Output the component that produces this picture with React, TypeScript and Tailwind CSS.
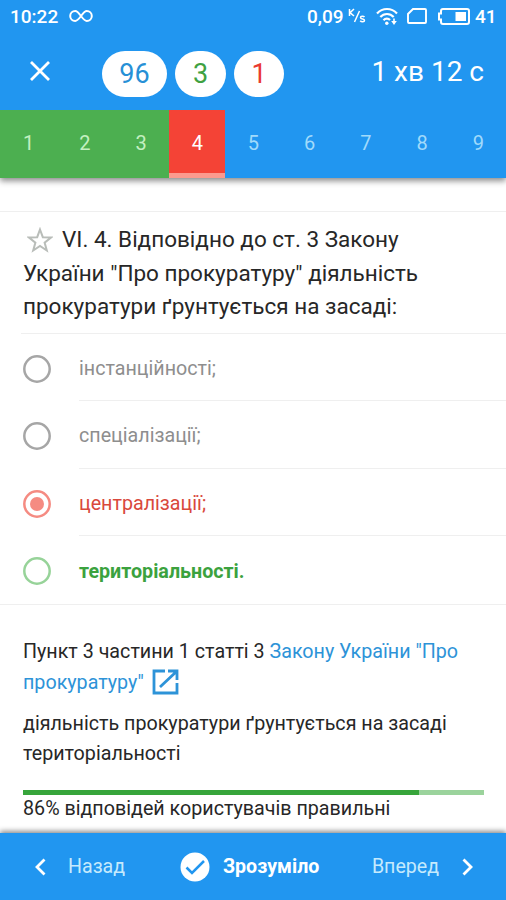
import clsx from 'clsx';

const tabs = [1, 2, 3, 4, 5, 6, 7, 8, 9];

const answers = [
  { text: 'інстанційності;', state: 'idle' },
  { text: 'спеціалізації;', state: 'idle' },
  { text: 'централізації;', state: 'wrong' },
  { text: 'територіальності.', state: 'correct' },
];

const correctPercent = 86;

function StatusBar() {
  return (
    <div className="flex h-8 items-center pl-[10px] pr-[10px] text-[19px] font-medium leading-none text-white">
      <span className="w-[50px] whitespace-nowrap">10:22</span>
      <svg className="ml-[9px] h-[14px] w-6" viewBox="0 0 24 14" fill="none" stroke="currentColor" strokeWidth="2">
        <path d="M12 7C9.8 4 8.4 2 6.2 2a5 5 0 0 0 0 10C8.4 12 9.800 10 12 7s3.600-5 5.800-5a5 5 0 0 1 0 10C15.600 12 14.200 10 12 7z" />
      </svg>
      <span className="ml-auto w-[38px] whitespace-nowrap">0,09</span>
      <svg className="ml-[3px] h-4 w-[18px]" viewBox="0 0 18 16" fill="none" stroke="currentColor" strokeWidth="1.500">
        <path d="M1.500 1v7M6 1 2 4.700 6 8M11.500 3 6.500 14" />
        <path d="M16.500 9c-1-1.200-4-1.200-4 .400 0 2 4 1.200 4 3 0 1.600-3.200 1.600-4.300.300" />
      </svg>
      <svg className="ml-[10px] h-[19px] w-[22px]" viewBox="0 0 22 19" fill="none" stroke="currentColor" strokeWidth="2.200">
        <path d="M1 6.500C6.500.500 15.500.500 21 6.500M4.300 10c3.700-4 9.700-4 13.400 0M7.500 13.200c1.900-2 4.800-2 6.500-.200" />
        <circle cx="10.800" cy="16.300" r="1.700" fill="currentColor" stroke="none" />
        <path d="M18 11.500v4" strokeWidth="1.600" />
        <path d="M15.200 14h5.600L18 18z" fill="currentColor" stroke="none" />
      </svg>
      <svg className="ml-[9px] h-4 w-5" viewBox="0 0 20 16" fill="none" stroke="currentColor" strokeWidth="1.900">
        <path d="M6 1h12a1 1 0 0 1 1 1v12a1 1 0 0 1-1 1H2a1 1 0 0 1-1-1V6z" />
      </svg>
      <svg className="ml-[10px] h-[17px] w-[33px]" viewBox="0 0 33 17" fill="none" stroke="currentColor" strokeWidth="2">
        <path d="M6 1h24a2 2 0 0 1 2 2v11a2 2 0 0 1-2 2H6a2 2 0 0 1-2-2v-2.500H2v-6h2V3a2 2 0 0 1 2-2z" />
        <path d="M18.500 4H29v9H18.500z" fill="currentColor" stroke="none" />
      </svg>
      <span className="ml-[5px] w-[21px]">41</span>
    </div>
  );
}

function Toolbar() {
  return (
    <div className="flex h-[78px] items-center pl-[29px] pr-[22px] pt-[6px]">
      <svg className="mb-[6px] h-[22px] w-[22px]" viewBox="0 0 22 22" fill="none" stroke="#fff" strokeWidth="2.800">
        <path d="m2 2 18 18M20 2 2 20" />
      </svg>
      <div className="ml-[51px] flex gap-2 text-[27px] leading-none">
        <span className="flex h-[46px] w-[65px] items-center justify-center rounded-full bg-white text-[#2790d6]">96</span>
        <span className="flex h-[46px] w-[51px] items-center justify-center rounded-full bg-white text-[#3fa142]">3</span>
        <span className="flex h-[46px] w-[50px] items-center justify-center rounded-full bg-white text-[#ea3a30]">1</span>
      </div>
      <span className="mb-[5px] ml-auto whitespace-nowrap text-[28px] leading-none text-white">1 хв 12 с</span>
    </div>
  );
}

function QuestionTabs() {
  return (
    <div className="grid h-[68px] grid-cols-9 text-[20px]">
      {tabs.map((n) => (
        <div
          key={n}
          className={clsx(
            'flex items-center justify-center pb-[2px] pl-px',
            n < 4 && 'bg-[#4caf50] text-[#c3f0c0]',
            n === 4 && 'border-b-[5px] border-[#fb9a8e] bg-[#f44336] pt-[5px] text-white',
            n > 4 && 'text-[#a0dafb]'
          )}
        >
          {n}
        </div>
      ))}
    </div>
  );
}

const radioColors: Record<string, string> = {
  idle: 'text-[#a6a6a6]',
  wrong: 'text-[#f58b82]',
  correct: 'text-[#97d399]',
};

function Radio({ state }: { state: string }) {
  return (
    <svg className={clsx('h-7 w-7 shrink-0', radioColors[state])} viewBox="0 0 28 28" fill="none" stroke="currentColor" strokeWidth="2.500">
      <circle cx="14" cy="14" r="12.700" />
      {state === 'wrong' && <circle cx="14" cy="14" r="7" fill="currentColor" stroke="none" />}
    </svg>
  );
}

export default function App() {
  return (
    <div className="flex h-[900px] w-[506px] flex-col overflow-hidden bg-white font-[Roboto,sans-serif] text-[#272727]">
      <header className="relative bg-[#2196f0] shadow-[0_3px_6px_rgba(0,0,0,0.45)]">
        <StatusBar />
        <Toolbar />
        <QuestionTabs />
      </header>

      <main className="flex-1">
        <div className="mt-[33px] border-t border-[#efefef]" />
        <h1 className="ml-[23px] mt-[11px] text-[22.500px] leading-[33.500px]">
          <span className="flex items-center">
            <svg className="ml-[4px] mr-[9px] h-[26px] w-[26px]" viewBox="0 0 26 26" fill="none" stroke="#b9bdb9" strokeWidth="2">
              <path d="m13 2.500 2.800 7.700 8.200.300-6.400 5.100 2.200 7.900L13 19l-6.800 4.500 2.200-7.900L2 10.500l8.200-.300z" />
            </svg>
            <span className="whitespace-nowrap">VI. 4. Відповідно до ст. 3 Закону</span>
          </span>
          <span className="block whitespace-nowrap">України "Про прокуратуру" діяльність</span>
          <span className="block whitespace-nowrap">прокуратури ґрунтується на засаді:</span>
        </h1>
        <div className="ml-[21px] mt-[9px] border-t border-[#efefef]" />

        <ul>
          {answers.map((a, i) => (
            <li key={a.text} className="flex h-[67.500px] items-stretch pl-[23px]">
              <span className="flex items-center pt-[3px]">
                <Radio state={a.state} />
              </span>
              <span
                className={clsx(
                  'ml-7 flex flex-1 items-center whitespace-nowrap pt-[4px] text-[19.700px]',
                  i < 3 && 'border-b border-[#efefef]',
                  a.state === 'idle' && 'text-[#8e8e8e]',
                  a.state === 'wrong' && 'text-[#d9493c]',
                  a.state === 'correct' && 'font-bold text-[#3ba23e]'
                )}
              >
                {a.text}
              </span>
            </li>
          ))}
        </ul>
        <div className="border-t border-[#efefef]" />

        <section className="ml-[23px] mt-[31px] text-[19.700px] leading-[31px]">
          <p className="whitespace-nowrap">
            Пункт 3 частини 1 статті 3 <span className="text-[#2d93d8]">Закону України "Про</span>
          </p>
          <p className="flex items-center whitespace-nowrap text-[#2d93d8]">
            прокуратуру"
            <svg className="ml-2 h-[26px] w-[27px]" viewBox="0 0 27 26" fill="none" stroke="currentColor" strokeWidth="2.800">
              <path d="M13 2H2v22h23V14M16 2h9v9M24.500 2.500 8 18" />
            </svg>
          </p>
          <p className="mt-[11px] whitespace-nowrap leading-[29px]">діяльність прокуратури ґрунтується на засаді</p>
          <p className="whitespace-nowrap leading-[31px]">територіальності</p>
          <div className="mt-[21px] h-[5px] w-[461px] bg-[#9bd39c]">
            <div className="h-full bg-[#37a53b]" style={{ width: `${correctPercent}%` }} />
          </div>
          <p className="whitespace-nowrap leading-[27px]">{correctPercent}% відповідей користувачів правильні</p>
        </section>
      </main>

      <footer className="relative flex h-[67px] shrink-0 items-center bg-[#2196f0] pl-[35px] pr-[33px] text-[19.600px] text-[#c5eafd] shadow-[0_-2px_5px_rgba(0,0,0,0.45)]">
        <svg className="h-[18px] w-[11px]" viewBox="0 0 11 18" fill="none" stroke="#fff" strokeWidth="2.800">
          <path d="m9.500 1.500-7.500 7.500 7.500 7.500" />
        </svg>
        <span className="ml-[22px] w-[58px] whitespace-nowrap">Назад</span>
        <svg className="ml-[54px] h-[30px] w-[30px]" viewBox="0 0 30 30" fill="none">
          <circle cx="15" cy="15" r="14.500" fill="#fff" />
          <path d="m6.500 15.500 5.500 5.500L24 9" stroke="#2196f0" strokeWidth="2.500" />
        </svg>
        <span className="ml-[13px] w-[98px] whitespace-nowrap font-bold text-white">Зрозуміло</span>
        <span className="ml-auto whitespace-nowrap">Вперед</span>
        <svg className="ml-[23px] h-[18px] w-[11px]" viewBox="0 0 11 18" fill="none" stroke="#fff" strokeWidth="2.800">
          <path d="m1.500 1.500 7.500 7.500-7.500 7.500" />
        </svg>
      </footer>
    </div>
  );
}
